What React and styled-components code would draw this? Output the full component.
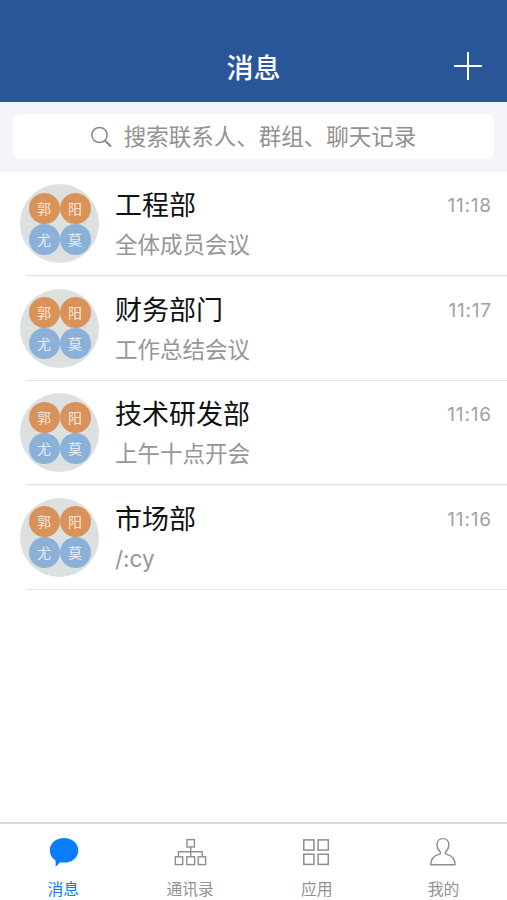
import React from "react";
import styled, { createGlobalStyle } from 'styled-components';

const chats = [
  { id: 1, name: '工程部', message: '全体成员会议', time: '11:18' },
  { id: 2, name: '财务部门', message: '工作总结会议', time: '11:17' },
  { id: 3, name: '技术研发部', message: '上午十点开会', time: '11:16' },
  { id: 4, name: '市场部', message: '/:cy', time: '11:16' },
];

const members = [
  { name: '郭', color: '#d9935a' },
  { name: '阳', color: '#d9935a' },
  { name: '尤', color: '#8bb1d8' },
  { name: '莫', color: '#8bb1d8' },
];

const BubbleIcon = () => (
  <svg width="34" height="34" viewBox="-1 0 34 34">
    <path d="M17 3.100C25 3.100 31.300 8.400 31.300 15.400S25 27.600 17 27.600c-1.400 0-2.700-.1-3.900-.4-1.200 1.500-2.500 2.900-4.600 4.200.3-1.700.3-3.700-.2-6.100C5 23.100 2.800 19.500 2.800 15.400 2.800 8.400 9 3.100 17 3.100z" fill="#0a7cff" />
  </svg>
);

const OrgIcon = () => (
  <svg width="34" height="34" viewBox="0 0 34 34" fill="none" stroke="#8e8e8e" strokeWidth="1.4">
    <rect x="14" y="4.600" width="7.400" height="7.400" />
    <rect x="2.300" y="21.800" width="7.400" height="7.800" />
    <rect x="13.800" y="21.800" width="7.800" height="7.800" />
    <rect x="25.200" y="21.800" width="7.400" height="7.800" />
    <path d="M17.700 12v9.800M5.500 21.800v-5h23.700v5" />
  </svg>
);

const AppsIcon = () => (
  <svg width="34" height="34" viewBox="1 0 34 34" fill="none" stroke="#8e8e8e" strokeWidth="1.5">
    <rect x="4.800" y="4.900" width="10.200" height="10.200" />
    <rect x="19.100" y="4.900" width="10.200" height="10.200" />
    <rect x="4.800" y="19.200" width="10.200" height="10.200" />
    <rect x="19.100" y="19.200" width="10.200" height="10.200" />
  </svg>
);

const PersonIcon = () => (
  <svg width="34" height="34" viewBox="1 0 34 34" fill="none" stroke="#8e8e8e" strokeWidth="1.4" strokeLinejoin="round">
    <path d="M14.500 18.300c.2-.6 0-1.200-.5-1.700C12.100 15 11 12.400 11 9.800c0-3.700 2.500-6.200 5.900-6.200s5.900 2.500 5.900 6.200c0 2.600-1.100 5.200-3 6.800-.5.5-.7 1.100-.5 1.700.2.7.8.9 1.500 1.100 4.700 1.200 8.300 4.500 8.300 10.400H4.700c0-5.900 3.600-9.200 8.300-10.400.7-.2 1.300-.4 1.500-1.100z" />
  </svg>
);

const tabs = [
  { label: '消息', icon: BubbleIcon, active: true },
  { label: '通讯录', icon: OrgIcon },
  { label: '应用', icon: AppsIcon },
  { label: '我的', icon: PersonIcon },
];

const Chat = ({ chat }) => (
  <ChatRow>
    <Avatar>
      {members.map(m => <Member key={m.name} $color={m.color}>{m.name}</Member>)}
    </Avatar>
    <ChatBody>
      <ChatText>
        <ChatName>{chat.name}</ChatName>
        <ChatMessage>{chat.message}</ChatMessage>
      </ChatText>
      <Time>{chat.time}</Time>
    </ChatBody>
  </ChatRow>
);

function App() {
  return (
    <>
      <GlobalStyle />
      <Screen>
        <Header>
          <span />
          <Title>消息</Title>
          <AddButton aria-label="add">
            <svg width="30" height="30" viewBox="0 0 30 30">
              <path d="M15 1v28M1 15h28" stroke="#fff" strokeWidth="2" />
            </svg>
          </AddButton>
        </Header>
        <SearchBar>
          <SearchField>
            <svg width="22" height="22" viewBox="0 0 22 22" fill="none" stroke="#8a8a8a">
              <circle cx="8.500" cy="9" r="7.600" strokeWidth="1.500" />
              <path d="M14 14.500l6 6" strokeWidth="2.200" />
            </svg>
            <Placeholder>搜索联系人、群组、聊天记录</Placeholder>
          </SearchField>
        </SearchBar>
        <List>
          {chats.map(chat => <Chat key={chat.id} chat={chat} />)}
        </List>
        <TabBar>
          {tabs.map(({ label, icon: Icon, active }) => (
            <Tab key={label} $active={active}>
              <Icon />
              <TabLabel>{label}</TabLabel>
            </Tab>
          ))}
        </TabBar>
      </Screen>
    </>
  );
}

const GlobalStyle = createGlobalStyle`
  * {
    box-sizing: border-box;
  }
  body {
    margin: 0;
    background-color: white;
    font-family: Inter, "Noto Sans CJK SC", sans-serif;
  }
`
const Screen = styled.div`
  display: flex;
  flex-direction: column;
  height: 100vh;
  overflow: hidden;
`
const Header = styled.header`
  display: grid;
  grid-template-columns: 1fr auto 1fr;
  align-items: center;
  height: 102px;
  flex-shrink: 0;
  padding: 35px 24px 0;
  background-color: #295699;
  color: white;
`
const Title = styled.h1`
  margin: 0;
  font-size: 27px;
  font-weight: 500;
  line-height: 40px;
`
const AddButton = styled.button`
  justify-self: end;
  display: flex;
  padding: 0;
  border: 0;
  background: none;
  margin-bottom: 6px;
`
const SearchBar = styled.div`
  height: 70px;
  flex-shrink: 0;
  padding: 12px 13px 13px;
  background-color: #f3f5f9;
`
const SearchField = styled.div`
  display: flex;
  align-items: center;
  justify-content: center;
  gap: 11px;
  height: 45px;
  border-radius: 7px;
  background-color: white;
`
const Placeholder = styled.span`
  color: #929292;
  font-size: 22.5px;
  line-height: 34px;
`
const List = styled.main`
  flex: 1;
`
const ChatRow = styled.div`
  display: flex;
  height: 104.5px;
  padding-left: 20px;
  background: linear-gradient(#e4e4e6, #e4e4e6) 26px 100% / 100% 1.5px no-repeat;
`
const Avatar = styled.div`
  display: grid;
  grid-template-columns: 31px 31px;
  grid-template-rows: 31px 31px;
  place-content: center;
  width: 79px;
  height: 79px;
  margin-top: 12px;
  border-radius: 50%;
  background-color: #dce0df;
`
const Member = styled.div`
  display: flex;
  align-items: center;
  justify-content: center;
  padding-top: 1px;
  border-radius: 50%;
  background-color: ${props => props.$color};
  color: rgba(255, 255, 255, .8);
  font-size: 14px;
  line-height: 20px;
`
const ChatBody = styled.div`
  flex: 1;
  display: flex;
  justify-content: space-between;
  padding: 14px 16px 0;
`
const ChatText = styled.div`
  display: flex;
  flex-direction: column;
`
const ChatName = styled.div`
  color: #111;
  font-size: 27px;
  line-height: 40px;
`
const ChatMessage = styled.div`
  color: #969696;
  font-size: 22.5px;
  line-height: 38px;
`
const Time = styled.div`
  color: #a2a2a2;
  font-size: 19px;
  letter-spacing: .8px;
  line-height: 40px;
  margin-right: -.8px;
`
const TabBar = styled.nav`
  display: grid;
  grid-template-columns: repeat(4, 1fr);
  height: 78.5px;
  flex-shrink: 0;
  border-top: 2px solid #d9d9d9;
`
const Tab = styled.div`
  display: flex;
  flex-direction: column;
  align-items: center;
  padding-top: 11px;
  color: ${props => props.$active ? '#0a7cff' : '#929292'};
`
const TabLabel = styled.span`
  margin-top: 9px;
  font-size: 15.8px;
  line-height: 24px;
`

export default App;
